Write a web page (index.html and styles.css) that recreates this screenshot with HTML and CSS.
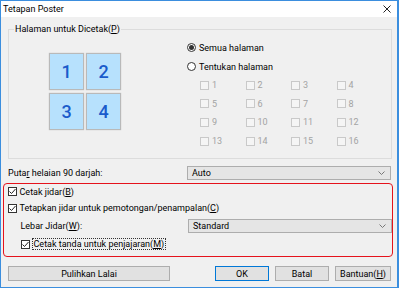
FILE: index.html
```html
<!DOCTYPE html>
<html>
<head>
<link rel="stylesheet" href="styles.css">
</head>
<body>
  <div class="dialog">
    <div class="dialog__title">
      <span>Tetapan Poster</span>
      <svg class="dialog__close" width="8" height="8" viewBox="0 0 8 8"><path d="M0.5 0.5L7.5 7.5M7.5 0.5L0.5 7.5" stroke="#222" stroke-width="1"/></svg>
    </div>
    <div class="dialog__body">
      <fieldset class="pages">
        <legend class="pages__legend">Halaman untuk Dicetak(<u>P</u>)</legend>
        <div class="pages__preview">
          <div class="tiles">
            <div class="tile">1</div>
            <div class="tile">2</div>
            <div class="tile">3</div>
            <div class="tile">4</div>
          </div>
        </div>
        <div class="pages__options">
          <label class="option"><span class="radio radio--on"></span>Semua halaman</label>
          <label class="option"><span class="radio"></span>Tentukan halaman</label>
          <div class="pick">
            <span class="pick__item"><span class="box box--off"></span>1</span>
            <span class="pick__item"><span class="box box--off"></span>2</span>
            <span class="pick__item"><span class="box box--off"></span>3</span>
            <span class="pick__item"><span class="box box--off"></span>4</span>
            <span class="pick__item"><span class="box box--off"></span>5</span>
            <span class="pick__item"><span class="box box--off"></span>6</span>
            <span class="pick__item"><span class="box box--off"></span>7</span>
            <span class="pick__item"><span class="box box--off"></span>8</span>
            <span class="pick__item"><span class="box box--off"></span>9</span>
            <span class="pick__item"><span class="box box--off"></span>10</span>
            <span class="pick__item"><span class="box box--off"></span>11</span>
            <span class="pick__item"><span class="box box--off"></span>12</span>
            <span class="pick__item"><span class="box box--off"></span>13</span>
            <span class="pick__item"><span class="box box--off"></span>14</span>
            <span class="pick__item"><span class="box box--off"></span>15</span>
            <span class="pick__item"><span class="box box--off"></span>16</span>
          </div>
        </div>
      </fieldset>

      <div class="row row--rotate">
        <span>Puta<u>r</u> helaian 90 darjah:</span>
        <div class="combo">Auto<svg class="combo__arrow" width="7" height="4" viewBox="0 0 7 4"><path d="M0.5 0.5L3.5 3.5L6.5 0.5" stroke="#777" fill="none"/></svg></div>
      </div>

      <div class="margins">
        <label class="row row--first"><span class="box"><svg width="9" height="9" viewBox="0 0 9 9"><path d="M1.5 4.5L3.5 6.5L7.5 2" stroke="#222" fill="none"/></svg></span>Cetak jidar(<u>B</u>)</label>
        <label class="row"><span class="box"><svg width="9" height="9" viewBox="0 0 9 9"><path d="M1.5 4.5L3.5 6.5L7.5 2" stroke="#222" fill="none"/></svg></span>Tetapkan jidar untuk pemotongan/penampalan(<u>C</u>)</label>
        <div class="row row--indent">
          <span>Lebar Jidar(<u>W</u>):</span>
          <div class="combo">Standard<svg class="combo__arrow" width="7" height="4" viewBox="0 0 7 4"><path d="M0.5 0.5L3.5 3.5L6.5 0.5" stroke="#777" fill="none"/></svg></div>
        </div>
        <label class="row row--indent"><span class="box"><svg width="9" height="9" viewBox="0 0 9 9"><path d="M1.5 4.5L3.5 6.5L7.5 2" stroke="#222" fill="none"/></svg></span><span class="focus">Cetak tanda untuk penjajaran(<u>M</u>)</span></label>
      </div>

      <div class="buttons">
        <button class="btn btn--wide">Pulihkan Lalai</button>
        <div class="buttons__right">
          <button class="btn btn--ok">OK</button>
          <button class="btn">Batal</button>
          <button class="btn btn--help">Bantuan(<u>H</u>)</button>
        </div>
      </div>
    </div>
  </div>
</body>
</html>
```

FILE: styles.css
```css
* { box-sizing: border-box; }
body {
  margin: 0;
  font-family: Roboto, "Liberation Sans", sans-serif;
  font-size: 9px;
  color: #000;
}

.dialog {
  width: 399px;
  height: 288px;
  background: #f0f0f0;
  border: 1px solid #3b8ede;
  border-right-width: 2px;
  display: flex;
  flex-direction: column;
}

.dialog__title {
  height: 16px;
  background: #fff;
  display: flex;
  align-items: center;
  justify-content: space-between;
  padding: 0 6px 0 2px;
}

.dialog__body {
  flex: 1;
  padding: 0 5px 0 7px;
}

/* page group */
.pages {
  margin: 7px 0 0;
  padding: 0;
  border: 1px solid #dcdcdc;
  display: flex;
  min-width: 0;
}

.pages__legend {
  margin-left: 5px;
  padding: 0 1px;
  line-height: 11px;
}

.pages__preview {
  width: 178px;
  padding: 18px 0 0 40px;
}

.tiles {
  display: grid;
  grid-template-columns: 35px 35px;
  grid-template-rows: 37px 37px;
  gap: 3px 2px;
}

.tile {
  background: #b7e1fd;
  border: 1px solid #b9b9b9;
  box-shadow: 0 0 1px #bbb;
  color: #1a5bcb;
  font-size: 18px;
  font-weight: 500;
  display: flex;
  align-items: center;
  justify-content: center;
}

.pages__options {
  flex: 1;
  padding: 3px 0 8px;
}

.option {
  display: flex;
  align-items: center;
  height: 19px;
}

.radio {
  width: 9px;
  height: 9px;
  border: 1px solid #333;
  border-radius: 50%;
  margin-right: 3px;
  background: #fff;
  display: flex;
  align-items: center;
  justify-content: center;
}

.radio--on::after {
  content: "";
  width: 5px;
  height: 5px;
  border-radius: 50%;
  background: #333;
}

.pick {
  display: grid;
  grid-template-columns: repeat(4, 45.5px);
  grid-auto-rows: 18.6px;
  margin-left: 13px;
  color: #a3a3a3;
}

.pick__item {
  display: flex;
  align-items: center;
}

.box {
  width: 9px;
  height: 9px;
  border: 1px solid #333;
  background: #fff;
  margin-right: 3px;
  display: flex;
  flex-shrink: 0;
}

.box svg {
  margin: -1px;
}

.box--off {
  border-color: #c9c9c9;
  background: #f5f5f5;
}

/* rows below */
.row {
  display: flex;
  align-items: center;
  justify-content: space-between;
  height: 18px;
}

label.row {
  justify-content: flex-start;
}

.row--rotate {
  margin-top: 6px;
  height: 16px;
}

.row--first {
  height: 15px;
}

.row--indent {
  padding-left: 13px;
}

.combo {
  width: 204px;
  height: 14px;
  margin-right: 1px;
  background: #e5e5e5;
  border: 1px solid #adadad;
  padding: 0 5px 0 4px;
  display: flex;
  align-items: center;
  justify-content: space-between;
}

.margins {
  margin: 2px -1px 0 -5px;
  height: 74px;
  border: 1.5px solid #e5121c;
  border-radius: 4px;
  padding: 0 0 0 3.5px;
}

.margins .combo {
  margin-right: 0;
}

.focus {
  outline: 1px dotted #333;
  outline-offset: 0;
  padding: 0 1px;
}

/* buttons */
.buttons {
  display: flex;
  justify-content: space-between;
  margin-top: 9px;
}

.buttons__right {
  display: flex;
  gap: 6px;
  margin-right: 1px;
}

.btn {
  height: 15px;
  width: 54px;
  padding: 0;
  font: inherit;
  background: #e1e1e1;
  border: 1px solid #adadad;
  color: #000;
}

.btn--wide {
  width: 162px;
}

.btn--ok {
  border-color: #0078d7;
}

.btn--help {
  width: 56px;
}
```
